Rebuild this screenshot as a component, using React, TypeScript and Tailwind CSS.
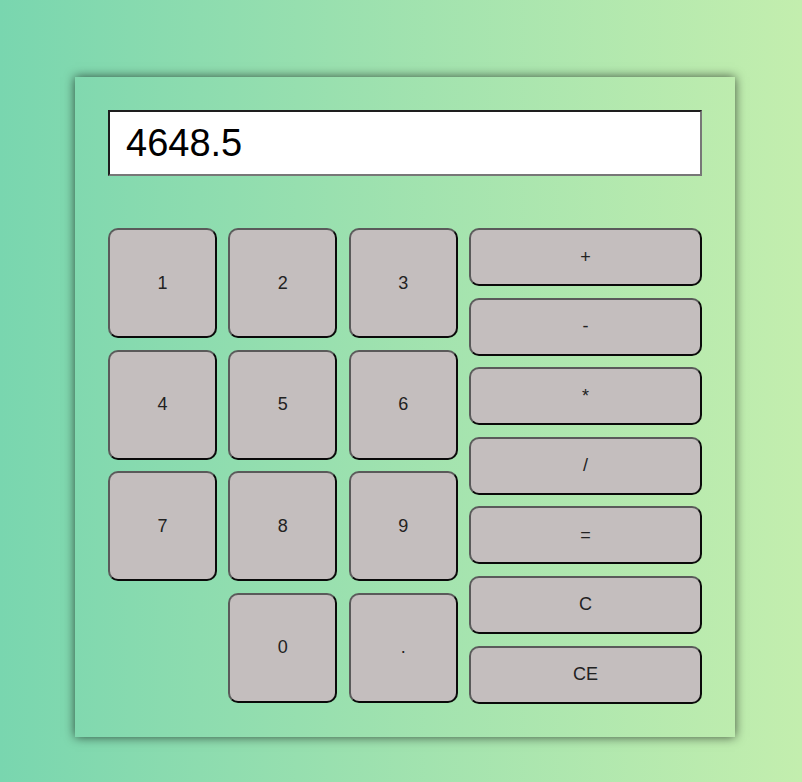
import React from "react";

const digitRows = [
  ["1", "2", "3"],
  ["4", "5", "6"],
  ["7", "8", "9"],
  ["", "0", "."],
];
const ops = ["+", "-", "*", "/", "=", "C", "CE"];

const btn =
  "flex items-center justify-center bg-[#c4bebe] text-[#222] text-[18px] rounded-[10px] border-2 border-t-[#5a5a5a] border-l-[#5a5a5a] border-b-[#0a0a0a] border-r-[#0a0a0a]";

export default function App() {
  return (
    <div
      className="w-[802px] h-[782px] bg-gradient-to-r from-[#79d6af] to-[#c3eeae] pt-[77px] pl-[75px]"
      style={{ fontFamily: '"Liberation Sans", Arial, sans-serif' }}
    >
      <div className="w-[660px] h-[660px] shadow-[0_0_10px_rgba(0,0,0,0.65)] px-[33px] pt-[33px]">
        <div className="h-[66px] w-[594px] bg-white border-2 border-t-[#1e1e1e] border-l-[#1e1e1e] border-b-[#777] border-r-[#777] flex items-center pl-[16px] text-[38px] text-black">
          4648.5
        </div>
        <div className="mt-[52px] flex gap-[11.33px]">
          <div className="grid grid-cols-[109px_109px_109px] grid-rows-[110px_110px_110px_110px] gap-x-[11.33px] gap-y-[11.5px]">
            {digitRows.flat().map((d, i) =>
              d === "" ? (
                <div key={i} />
              ) : (
                <div key={i} className={btn}>
                  {d}
                </div>
              )
            )}
          </div>
          <div className="flex flex-col gap-[11.6px] w-[233px]">
            {ops.map((o) => (
              <div key={o} className={btn + " h-[58px]"}>
                {o}
              </div>
            ))}
          </div>
        </div>
      </div>
    </div>
  );
}
